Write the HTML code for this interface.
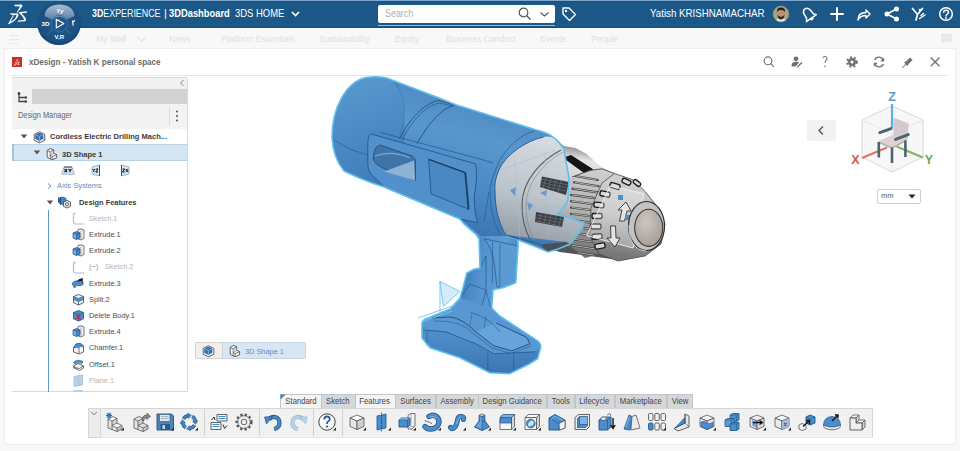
<!DOCTYPE html>
<html><head><meta charset="utf-8">
<style>
*{margin:0;padding:0;box-sizing:border-box}
html,body{width:960px;height:451px;overflow:hidden;background:#f8f8f8;font-family:"Liberation Sans",sans-serif;position:relative}
.a{position:absolute}
#hdr{left:0;top:0;width:960px;height:27.6px;background:#1b5888;border-top:1px solid #80a9d0;box-shadow:inset 0 1px 0 #1f4e7a,inset 0 -1px 0 #1a4b78}
.ht{color:#fff;font-size:11px;top:8px;white-space:nowrap;line-height:11px}
#nav{left:0;top:27.6px;width:960px;height:20.8px;background:#f8f8f8;border-top:1px solid #fdfdfd}
.nt{color:#e0e0e0;font-size:9.6px;top:34px;white-space:nowrap;line-height:10px;transform:scaleX(0.9);transform-origin:0 0}
#win{left:4px;top:48px;width:952px;height:397px;background:#fff;border:1px solid #ececec;border-top-color:#efefef}
</style></head><body>
<div id="hdr" class="a"></div>
<div id="nav" class="a"></div>
<div id="win" class="a"></div>
<!-- nav text -->
<svg class="a" style="left:9px;top:34px" width="10" height="11"><path d="M0 1.5H9.5M0 5.7H9.5M0 9.8H9.5" stroke="#e2e2e2" stroke-width="0.9"/></svg>
<div class="a nt m" style="left:96px">My Wall</div>
<svg class="a" style="left:137px;top:37px" width="9" height="5"><path d="M0.5 0.5L4.5 4L8.5 0.5" stroke="#d8d8d8" fill="none"/></svg>
<div class="a nt m" style="left:169px">News</div>
<div class="a nt m" style="left:221px">Platform Essentials</div>
<div class="a nt m" style="left:319px">Sustainability</div>
<div class="a nt m" style="left:395px">Equity</div>
<div class="a nt m" style="left:446px">Business Conduct</div>
<div class="a nt m" style="left:540px">Events</div>
<div class="a nt m" style="left:591px">People</div>
<svg class="a" style="left:940px;top:33px" width="13" height="12"><path d="M1 1H12V8.5H5L3 11V8.5H1Z" fill="#e8e8e8"/><circle cx="4" cy="4.8" r="0.7" fill="#f8f8f8"/><circle cx="6.5" cy="4.8" r="0.7" fill="#f8f8f8"/><circle cx="9" cy="4.8" r="0.7" fill="#f8f8f8"/></svg>

<!-- header content -->
<svg class="a" style="left:0;top:0" width="36" height="27" viewBox="0 0 36 27"><g fill="#fff">
<path d="M14.3 4.8L21.6 4.6Q23 5 22.2 6.6L17.6 12.6L16.6 12.4L20.2 6.4L14.8 6.3Z"/>
<path d="M10.2 13.3L17.6 13.5Q19 13.8 18.4 15.6Q16.5 21 8.8 24.2Q7.9 24.3 8.3 23.5L13.1 15.1L13.9 15.3L10.6 21.8Q15.6 19.4 16.6 14.9L10.8 14.8Z"/>
<path d="M18.6 12.2L27.2 11.2L26.6 12.8L21.4 13.2Q24.6 16 25.8 18.6Q26.6 20.6 25 21.2L17.4 21.8L18.2 20.6L24.2 20Q23.4 17 20.6 14.6Q19.6 13.6 18.6 12.2Z"/>
</g></svg>
<div class="a ht m" style="left:91.5px;transform:scaleX(0.806);transform-origin:0 0"><b>3D</b>EXPERIENCE</div>
<div class="a ht m" style="left:164px">|</div>
<div class="a ht m" style="left:169.4px;transform:scaleX(0.85);transform-origin:0 0"><b>3DDashboard</b></div>
<div class="a ht m" style="left:235.4px;transform:scaleX(0.86);transform-origin:0 0">3DS HOME</div>
<svg class="a" style="left:291px;top:11px" width="9" height="6"><path d="M1 1L4.5 4.5L8 1" stroke="#fff" stroke-width="1.6" fill="none"/></svg>
<!-- search -->
<div class="a" style="left:378px;top:5px;width:177px;height:18px;background:#fff;border-radius:2px"></div>
<div class="a" style="left:378px;top:25px;width:177px;height:1px;background:#9fb6cc"></div>
<div class="a" style="left:385px;top:9px;font-size:10px;color:#b0b0b0;line-height:10px;transform:scaleX(0.89);transform-origin:0 0">Search</div>
<svg class="a" style="left:518px;top:7px" width="14" height="14"><circle cx="5.5" cy="5.5" r="4.3" stroke="#555" stroke-width="1.2" fill="none"/><path d="M8.7 8.7L12.5 12.5" stroke="#555" stroke-width="1.3"/></svg>
<svg class="a" style="left:540px;top:12px" width="9" height="5"><path d="M0.5 0.5L4.5 4L8.5 0.5" stroke="#555" stroke-width="1.1" fill="none"/></svg>
<svg class="a" style="left:561px;top:6px" width="16" height="16"><path d="M2 2H8L14.5 8.5L8.5 14.5L2 8Z" stroke="#fff" stroke-width="1.4" fill="none" stroke-linejoin="round"/><circle cx="5" cy="5" r="1.2" fill="#fff"/></svg>
<div class="a ht m" style="left:649.7px;transform:scaleX(0.885);transform-origin:0 0">Yatish KRISHNAMACHAR</div>
<svg class="a" style="left:772px;top:5px" width="18" height="18" viewBox="0 0 18 18"><defs><clipPath id="av"><circle cx="9" cy="9" r="7.9"/></clipPath></defs><g clip-path="url(#av)"><rect width="18" height="18" fill="#a9a67e"/><path d="M3 18Q4 13 9 13Q14 13 15 18Z" fill="#e8e8e8"/><ellipse cx="9" cy="9" rx="4" ry="5" fill="#b98f78"/><path d="M4.8 7.5Q4.5 2.5 9 2.6Q13.5 2.5 13.2 7.5Q12.5 5 9 5Q5.5 5 4.8 7.5Z" fill="#2b2522"/><path d="M5.5 10Q6 14.5 9 14.5Q12 14.5 12.5 10Q11 12 9 11.8Q7 12 5.5 10Z" fill="#2e2723"/></g><circle cx="9" cy="9" r="7.9" fill="none" stroke="#7f8f9a" stroke-width="0.6"/></svg>
<!-- right icons -->
<svg class="a" style="left:800px;top:6px" width="160" height="17" viewBox="0 0 160 17">
<g fill="none" stroke="#fff" stroke-width="1.5" stroke-linecap="round" stroke-linejoin="round">
<g transform="rotate(-35 8.5 8)"><path d="M8.5 1.8Q12 1.8 12.3 6.5L12.6 10.5L14.5 13H2.5L4.4 10.5L4.7 6.5Q5 1.8 8.5 1.8Z"/><path d="M7 13.5Q8.5 15.5 10 13.5"/></g>
<path d="M37 2V14M31 8H43" stroke-width="2"/>
<path d="M58 14C58 9 61 6.5 66 6.5V4L70 8L66 12V9.5C62 9.5 59.5 11 58 14Z"/>
<path d="M87 8L96.5 3M87 8L96.5 13" stroke-width="1.8"/>
<path d="M112.5 2.5L117.5 8.5L116 14M122.5 2.5L117.5 8.5" stroke-width="1.7"/><path d="M119.5 12.5L125 9M121 9.5L123.5 7.5" stroke-width="1.4"/>
<circle cx="146" cy="8" r="6.3"/><path d="M143.7 6.3C143.7 3.5 148.5 3.5 148.5 6.3C148.5 8 146 8 146 10"/>
</g>
<g fill="#fff"><circle cx="87" cy="8" r="2.5"/><circle cx="96.5" cy="3" r="2.5"/><circle cx="96.5" cy="13" r="2.5"/><circle cx="146" cy="12" r="0.9"/><circle cx="120" cy="4" r="1.3"/></g>
</svg>
<!-- TREE -->
<!-- panel -->
<div class="a" style="left:12px;top:77px;width:176px;height:315px;background:#fff;border:1px solid #d9d9d9;border-left:none;border-top-right-radius:3px"></div>
<div class="a" style="left:12px;top:78px;width:175px;height:11px;background:#f1f1f1;border-top-right-radius:3px"></div>
<svg class="a" style="left:179px;top:79px" width="6" height="8"><path d="M4.5 1L1.5 4L4.5 7" stroke="#777" fill="none" stroke-width="0.9"/></svg>
<div class="a" style="left:12px;top:89px;width:175px;height:15px;background:#d2d2d2"></div>
<div class="a" style="left:12px;top:89px;width:20px;height:15px;background:#f2f2f2"></div>
<svg class="a" style="left:17px;top:92px" width="11" height="11" viewBox="0 0 11 11"><g fill="none" stroke="#444" stroke-width="1.3"><path d="M2 1V9.5H8.5M2 5.5H8"/></g><circle cx="2" cy="1.5" r="1.4" fill="#444"/><circle cx="8.8" cy="5.5" r="1.3" fill="#444"/><circle cx="8.8" cy="9.5" r="1.3" fill="#444"/></svg>
<div class="a" style="left:12px;top:104px;width:175px;height:24.5px;background:#f3f3f3"></div>
<div class="a m" style="left:17.5px;top:111px;font-size:8.2px;line-height:10px;color:#666;white-space:nowrap;transform:scaleX(0.9);transform-origin:0 0">Design Manager</div>
<div class="a" style="left:169px;top:107px;width:1px;height:19px;background:#dcdcdc"></div>
<svg class="a" style="left:175px;top:110px" width="4" height="12"><circle cx="2" cy="1.5" r="1" fill="#555"/><circle cx="2" cy="6" r="1" fill="#555"/><circle cx="2" cy="10.5" r="1" fill="#555"/></svg>
<div class="a" style="left:13px;top:144px;width:174px;height:16.6px;background:#d5e5f2;border-top:1px solid #b9d1e5;border-bottom:1px solid #b9d1e5"></div>
<div class="a" style="left:12px;top:144px;width:2px;height:16.6px;background:#a9c3da"></div>
<div class="a" style="left:47.5px;top:209.5px;width:1.5px;height:182px;background:#5b98c8"></div>
<svg class="a" style="left:20px;top:134.20px" width="8" height="5" viewBox="0 0 8 5"><path d="M0.8 0.5H7.2L4 4.5Z" fill="#555"/></svg>
<svg class="a" style="left:32.5px;top:150.30px" width="8" height="5" viewBox="0 0 8 5"><path d="M0.8 0.5H7.2L4 4.5Z" fill="#555"/></svg>
<svg class="a" style="left:45.5px;top:199.50px" width="8" height="5" viewBox="0 0 8 5"><path d="M0.8 0.5H7.2L4 4.5Z" fill="#555"/></svg>
<svg class="a" style="left:46.5px;top:182.50px" width="5" height="6" viewBox="0 0 5 6"><path d="M1 0.5L4 3L1 5.5" stroke="#4a86c0" fill="none" stroke-width="0.9"/></svg>
<svg class="a" style="left:32.5px;top:130.60px" width="13" height="13" viewBox="0 0 13 13"><path d="M6.5 0.8L11.8 3.3V9.3L6.5 11.8L1.2 9.3V3.3Z" fill="#f6f6f6" stroke="#555" stroke-width="0.9" stroke-linejoin="round"/><path d="M2.6 3.8L6.2 2L10 3.6V7.6L6.4 9.6L2.6 7.8Z" fill="#2f73b0" stroke="#1d4f80" stroke-width="0.5"/><path d="M2.6 3.8L6.4 5.6L10 3.6M6.4 5.6V9.6" stroke="#9cc3e6" stroke-width="0.7" fill="none"/><path d="M10 7.6L11.8 9.3M6.4 9.6V11.8" stroke="#555" stroke-width="0.6"/></svg>
<svg class="a" style="left:45.5px;top:146.90px" width="12" height="13" viewBox="0 0 12 13"><path d="M1.2 3.4L4.6 1.4L7.6 2.8V6.2L10.6 7.6V10.8L6.2 12.8L1.2 10.4Z" fill="#f2f2f2" stroke="#555" stroke-width="0.9" stroke-linejoin="round"/><path d="M1.2 3.4L4.2 5V12M4.2 5L7.6 2.8M4.2 8.4L7.6 6.2M6.2 9.6L10.6 7.6M6.2 9.6V12.8M4.2 8.4L6.2 9.6" stroke="#555" stroke-width="0.75" fill="none"/><path d="M4.6 5.4L7.2 3.8V6.4L4.6 8Z" fill="#d9d9d9"/></svg>
<svg class="a" style="left:61px;top:165.5px" width="14" height="9" viewBox="0 0 14 9"><path d="M3 1H11L13.2 8.2H0.8Z" fill="#d3e6f5" stroke="#7f9bb5" stroke-width="0.7"/><path d="M3 1H11" stroke="#444" stroke-width="0.9"/><path d="M3.5 3.2L6 6.2M6 3.2L3.5 6.2M7.5 3.2L9 4.7L10.5 3.2M9 4.7V6.2" stroke="#111" stroke-width="1.1" fill="none"/></svg>
<svg class="a" style="left:91px;top:163.5px" width="10" height="13" viewBox="0 0 10 13"><path d="M1 3L8.5 1V12L1 10Z" fill="#d3e6f5" stroke="#7f9bb5" stroke-width="0.7"/><path d="M8.5 1V12" stroke="#444" stroke-width="0.9"/><path d="M1.5 5L2.8 6.3L4 5M2.8 6.3V8M4.8 5H7L4.8 8H7" stroke="#111" stroke-width="1" fill="none"/></svg>
<svg class="a" style="left:119.5px;top:163.5px" width="10" height="13" viewBox="0 0 10 13"><path d="M1.5 1L9 3V10L1.5 12Z" fill="#d3e6f5" stroke="#7f9bb5" stroke-width="0.7"/><path d="M1.5 1V12" stroke="#444" stroke-width="0.9"/><path d="M2.5 5H4.7L2.5 8H4.7M5.8 5L8.2 8M8.2 5L5.8 8" stroke="#111" stroke-width="1" fill="none"/></svg>
<svg class="a" style="left:56.5px;top:195.60px" width="15" height="13" viewBox="0 0 15 13"><path d="M2 2.5L5.5 1L9 2.5V7L5.5 8.5L2 7Z" fill="#3f86c6" stroke="#22486e" stroke-width="0.7"/><path d="M1.5 1.2V6.5M3.5 1V9" stroke="#22486e" stroke-width="0.9"/><path d="M6.5 6L10 4.5L13.5 6V10.5L10 12L6.5 10.5Z" fill="#eaeaea" stroke="#444" stroke-width="0.8"/><circle cx="10" cy="8.2" r="1.6" fill="none" stroke="#444" stroke-width="0.8"/></svg>
<svg class="a" style="left:71.5px;top:212.00px" width="13" height="13" viewBox="0 0 13 13"><path d="M1.5 1.5V10.5L3 12H12" fill="none" stroke="#a9bfd3" stroke-width="1.2"/><path d="M1.5 1.5H4" stroke="#a9bfd3" stroke-width="1.2"/></svg>
<svg class="a" style="left:71.5px;top:228.20px" width="13" height="13" viewBox="0 0 13 13"><path d="M6 1.5L9 0.8L12 2V10.5L9 12L6 10.8Z" fill="#f2f2f2" stroke="#555" stroke-width="0.8"/><path d="M9 2.5V11.5" stroke="#888" stroke-width="0.6"/><path d="M1 5L4.5 3.5L8 5V10L4.5 11.5L1 10Z" fill="#4189c9" stroke="#21507d" stroke-width="0.7"/><path d="M1 5L4.5 6.5L8 5M4.5 6.5V11.5" stroke="#21507d" stroke-width="0.6" fill="none"/><path d="M1.5 5.5L4.2 6.7V10.8L1.5 9.6Z" fill="#74afe3"/></svg>
<svg class="a" style="left:71.5px;top:244.40px" width="13" height="13" viewBox="0 0 13 13"><path d="M6 1.5L9 0.8L12 2V10.5L9 12L6 10.8Z" fill="#f2f2f2" stroke="#555" stroke-width="0.8"/><path d="M9 2.5V11.5" stroke="#888" stroke-width="0.6"/><path d="M1 5L4.5 3.5L8 5V10L4.5 11.5L1 10Z" fill="#4189c9" stroke="#21507d" stroke-width="0.7"/><path d="M1 5L4.5 6.5L8 5M4.5 6.5V11.5" stroke="#21507d" stroke-width="0.6" fill="none"/><path d="M1.5 5.5L4.2 6.7V10.8L1.5 9.6Z" fill="#74afe3"/></svg>
<svg class="a" style="left:71.5px;top:260.60px" width="13" height="13" viewBox="0 0 13 13"><path d="M1.5 1.5V10.5L3 12H12" fill="none" stroke="#a9bfd3" stroke-width="1.2"/><path d="M1.5 1.5H4" stroke="#a9bfd3" stroke-width="1.2"/></svg>
<svg class="a" style="left:71px;top:276.80px" width="14" height="13" viewBox="0 0 14 13"><path d="M1 6.5Q4 3 6 4Q8 5 10.5 2.5L12.5 7Q10 9.5 8 8.5Q5.5 7.5 3.5 11Z" fill="#4a8fcf" stroke="#21507d" stroke-width="0.7"/><path d="M7 2.5L12 1L11.2 6L10.2 3.8Z" fill="#111"/><path d="M6 4.2L10.8 3" stroke="#111" stroke-width="1"/></svg>
<svg class="a" style="left:71.5px;top:293.00px" width="13" height="13" viewBox="0 0 13 13"><path d="M1.5 3.5L6.5 1.5L11.5 3.5V9.8L6.5 12L1.5 9.8Z" fill="#f0f0f0" stroke="#444" stroke-width="0.8"/><path d="M1.5 3.5L6.5 5.5L11.5 3.5V6.5L6.5 8.5L1.5 6.5Z" fill="#5096d4" stroke="#21507d" stroke-width="0.6"/><path d="M6.5 8.5V12" stroke="#444" stroke-width="0.7"/></svg>
<svg class="a" style="left:71.5px;top:309.20px" width="13" height="13" viewBox="0 0 13 13"><path d="M1.5 3.5L6.5 1.5L11.5 3.5V9.8L6.5 12L1.5 9.8Z" fill="#4a8ecf" stroke="#21507d" stroke-width="0.8"/><path d="M1.5 3.5L6.5 5.5L11.5 3.5M6.5 5.5V12" stroke="#21507d" stroke-width="0.6" fill="none"/><path d="M4.3 6L8.3 10M8.3 6L4.3 10" stroke="#d8282a" stroke-width="1.4"/></svg>
<svg class="a" style="left:71.5px;top:325.40px" width="13" height="13" viewBox="0 0 13 13"><path d="M6 1.5L9 0.8L12 2V10.5L9 12L6 10.8Z" fill="#f2f2f2" stroke="#555" stroke-width="0.8"/><path d="M9 2.5V11.5" stroke="#888" stroke-width="0.6"/><path d="M1 5L4.5 3.5L8 5V10L4.5 11.5L1 10Z" fill="#4189c9" stroke="#21507d" stroke-width="0.7"/><path d="M1 5L4.5 6.5L8 5M4.5 6.5V11.5" stroke="#21507d" stroke-width="0.6" fill="none"/><path d="M1.5 5.5L4.2 6.7V10.8L1.5 9.6Z" fill="#74afe3"/></svg>
<svg class="a" style="left:71.5px;top:341.60px" width="13" height="13" viewBox="0 0 13 13"><path d="M1.5 6L4 2L8.5 1.5L11.5 4V10L7 12L1.5 10Z" fill="#f4f4f4" stroke="#444" stroke-width="0.8"/><path d="M1.5 6L4 2L8.5 1.5L11.5 4L7 5Z" fill="#4d92d2" stroke="#21507d" stroke-width="0.6"/><path d="M7 5V12" stroke="#444" stroke-width="0.7"/></svg>
<svg class="a" style="left:71.5px;top:357.80px" width="13" height="13" viewBox="0 0 13 13"><path d="M2 7.5L6 5.5L11.5 8L7.5 10.5L2 9.5Z" fill="#f2f2f2" stroke="#444" stroke-width="0.8"/><path d="M1.5 4.5Q5 0.5 11 3.5L10 5.5Q6 3.5 3 6Z" fill="#4d92d2" stroke="#21507d" stroke-width="0.6"/><path d="M2 7.5V10L7.5 12.5L11.5 10V8" fill="none" stroke="#444" stroke-width="0.8"/></svg>
<svg class="a" style="left:72.5px;top:373.60px" width="11" height="13" viewBox="0 0 11 13"><path d="M1 2.5L9.5 1V11L1 12.5Z" fill="#b8d3e8" stroke="#9cbad4" stroke-width="0.8"/><path d="M5.2 1.8V11.8" stroke="#9cbad4" stroke-width="0.6"/></svg>
<div class="a" style="left:73px;top:389.5px;width:10px;height:2px;background:#b8d3e8"></div>
<div class="a m" style="left:50.3px;top:128.90px;font-size:8px;line-height:16px;white-space:nowrap;color:#3a3a3a;font-weight:bold;transform:scaleX(0.94);transform-origin:0 0">Cordless Electric Drilling Mach...</div>
<div class="a m" style="left:62.4px;top:146.60px;font-size:8px;line-height:16px;white-space:nowrap;color:#3a3a3a;font-weight:bold;transform:scaleX(0.94);transform-origin:0 0">3D Shape 1</div>
<div class="a m" style="left:57px;top:178.10px;font-size:8px;line-height:16px;white-space:nowrap;color:#5a8fc3;font-weight:normal;transform:scaleX(0.933);transform-origin:0 0">Axis Systems</div>
<div class="a m" style="left:78.5px;top:195.20px;font-size:8px;line-height:16px;white-space:nowrap;color:#3a3a3a;font-weight:bold;transform:scaleX(0.923);transform-origin:0 0">Design Features</div>
<div class="a m" style="left:88.9px;top:210.70px;font-size:8px;line-height:16px;white-space:nowrap;color:#b5b5b5;font-weight:normal;transform:scaleX(0.913);transform-origin:0 0">Sketch.1</div>
<div class="a m" style="left:88.7px;top:226.90px;font-size:8px;line-height:16px;white-space:nowrap;color:#4d4d4d;font-weight:normal;transform:scaleX(0.925);transform-origin:0 0">Extrude.1</div>
<div class="a m" style="left:88.7px;top:243.10px;font-size:8px;line-height:16px;white-space:nowrap;color:#4d4d4d;font-weight:normal;transform:scaleX(0.925);transform-origin:0 0">Extrude.2</div>
<div class="a m" style="left:88.7px;top:259.30px;font-size:8px;line-height:16px;white-space:nowrap;color:#999;font-weight:normal;transform:scaleX(0.925);transform-origin:0 0">(−)</div>
<div class="a m" style="left:105px;top:259.30px;font-size:8px;line-height:16px;white-space:nowrap;color:#b5b5b5;font-weight:normal;transform:scaleX(0.913);transform-origin:0 0">Sketch.2</div>
<div class="a m" style="left:88.7px;top:275.50px;font-size:8px;line-height:16px;white-space:nowrap;color:#4d4d4d;font-weight:normal;transform:scaleX(0.925);transform-origin:0 0">Extrude.3</div>
<div class="a m" style="left:88.7px;top:291.70px;font-size:8px;line-height:16px;white-space:nowrap;color:#4d4d4d;font-weight:normal;transform:scaleX(0.925);transform-origin:0 0">Split.2</div>
<div class="a m" style="left:89px;top:307.90px;font-size:8px;line-height:16px;white-space:nowrap;color:#4d4d4d;font-weight:normal;transform:scaleX(0.923);transform-origin:0 0">Delete Body.1</div>
<div class="a m" style="left:88.7px;top:324.10px;font-size:8px;line-height:16px;white-space:nowrap;color:#4d4d4d;font-weight:normal;transform:scaleX(0.925);transform-origin:0 0">Extrude.4</div>
<div class="a m" style="left:88.7px;top:340.30px;font-size:8px;line-height:16px;white-space:nowrap;color:#4d4d4d;font-weight:normal;transform:scaleX(0.925);transform-origin:0 0">Chamfer.1</div>
<div class="a m" style="left:88.7px;top:356.50px;font-size:8px;line-height:16px;white-space:nowrap;color:#4d4d4d;font-weight:normal;transform:scaleX(0.925);transform-origin:0 0">Offset.1</div>
<div class="a m" style="left:88.7px;top:372.70px;font-size:8px;line-height:16px;white-space:nowrap;color:#b5b5b5;font-weight:normal;transform:scaleX(0.925);transform-origin:0 0">Plane.1</div>
<!-- /TREE -->
<!-- MODEL -->
<svg class="a" style="left:0;top:0" width="960" height="451" viewBox="0 0 960 451">
<defs>
<linearGradient id="gBody" gradientUnits="userSpaceOnUse" x1="470" y1="95" x2="435" y2="225"><stop offset="0" stop-color="#4f8ac2"/><stop offset="0.3" stop-color="#5896ce"/><stop offset="0.65" stop-color="#4b8ac7"/><stop offset="1" stop-color="#3a75b1"/></linearGradient>
<linearGradient id="gCap" gradientUnits="userSpaceOnUse" x1="345" y1="85" x2="380" y2="185"><stop offset="0" stop-color="#5896ce"/><stop offset="1" stop-color="#3f7dba"/></linearGradient>
<linearGradient id="gGray" gradientUnits="userSpaceOnUse" x1="560" y1="135" x2="530" y2="250"><stop offset="0" stop-color="#d9dee3"/><stop offset="0.55" stop-color="#bcc4cc"/><stop offset="1" stop-color="#8e979f"/></linearGradient>
<linearGradient id="gNoz" gradientUnits="userSpaceOnUse" x1="590" y1="148" x2="575" y2="255"><stop offset="0" stop-color="#8a8a8a"/><stop offset="0.12" stop-color="#e4e4e4"/><stop offset="0.5" stop-color="#c4c4c4"/><stop offset="1" stop-color="#6f6f6f"/></linearGradient>
<linearGradient id="gChuck" gradientUnits="userSpaceOnUse" x1="630" y1="175" x2="615" y2="262"><stop offset="0" stop-color="#cfcfcf"/><stop offset="0.5" stop-color="#b0b0b0"/><stop offset="1" stop-color="#6e6e6e"/></linearGradient>
<linearGradient id="gCone" gradientUnits="userSpaceOnUse" x1="650" y1="185" x2="640" y2="258"><stop offset="0" stop-color="#cfcfcf"/><stop offset="0.45" stop-color="#bababa"/><stop offset="1" stop-color="#777777"/></linearGradient>
<radialGradient id="gFace" cx="0.4" cy="0.35" r="0.7"><stop offset="0" stop-color="#cdc6c1"/><stop offset="1" stop-color="#a39c97"/></radialGradient>
<linearGradient id="gHandle" gradientUnits="userSpaceOnUse" x1="465" y1="260" x2="518" y2="270"><stop offset="0" stop-color="#3f7dbb"/><stop offset="0.35" stop-color="#5593cf"/><stop offset="0.7" stop-color="#5d9bd4"/><stop offset="1" stop-color="#4582c0"/></linearGradient>
<linearGradient id="gBaseF" gradientUnits="userSpaceOnUse" x1="480" y1="335" x2="480" y2="373"><stop offset="0" stop-color="#4f8dca"/><stop offset="1" stop-color="#3a76b2"/></linearGradient>
<clipPath id="cRib"><path d="M598 166Q612 168 628 180L606 252L597 251Q586 230 588 200Q590 178 598 166Z"/></clipPath>
</defs>
<!-- nozzle cone -->
<path d="M548 134L564 146L575.5 148L586 153.4L600 165.8L611 172.9L622 177L612 259L590 251L565 250L533 244Z" fill="url(#gNoz)"/>
<path d="M563 157.8L571 155L593.2 169.3L586 174.6Z" fill="#151515"/>
<path d="M533 244L600 248L612 259L560 252Z" fill="#555"/>
<!-- ribbed ring -->
<path d="M570 178L590 170.4L602 168.8L614.5 173.5L602 183L591 208L589.7 236L599 254L585 258L570 246Z" fill="url(#gChuck)"/>
<clipPath id="cRib2"><path d="M570 178L590 170.4L602 168.8L614.5 173.5L602 183L591 208L589.7 236L599 254L585 258L570 246Z"/></clipPath>
<g clip-path="url(#cRib2)">
<path d="M575.5 176.0L597.6 180.0M574.0 182.3L598.5 186.3M572.5 188.6L599.4 192.6M571.0 194.9L600.3 198.9M571.0 201.2L601.2 205.2M571.0 207.5L602.1 211.5M571.0 213.8L603.0 217.8M571.0 220.1L602.1 224.1M571.0 226.4L601.2 230.4M571.0 232.7L600.3 236.7M571.0 239.0L599.4 243.0M571.0 245.3L598.5 249.3M571.0 251.6L597.6 255.6" stroke="#3a3a3a" stroke-width="2.1" fill="none" stroke-linecap="round"/>
<path d="M576.5 176.0L596.6 180.0M575.0 182.3L597.5 186.3M573.5 188.6L598.4 192.6M572.0 194.9L599.3 198.9M572.0 201.2L600.2 205.2M572.0 207.5L601.1 211.5M572.0 213.8L602.0 217.8M572.0 220.1L601.1 224.1M572.0 226.4L600.2 230.4M572.0 232.7L599.3 236.7M572.0 239.0L598.4 243.0M572.0 245.3L597.5 249.3M572.0 251.6L596.6 255.6" stroke="#d0d0d0" stroke-width="0.8" fill="none" stroke-linecap="round"/>
</g>
<path d="M572 177L590 170.4L602 168.8L614.5 173.5" fill="none" stroke="#444" stroke-width="0.9"/>
<!-- collar cone -->
<path d="M614.5 173.5L633 179.7L645.6 192L658 207.6L665 224L661 244L645 256L618 261L599 254L589.7 236L591 208L602 183Z" fill="url(#gCone)" stroke="#4a4a4a" stroke-width="0.8"/>
<g fill="#d8d8d8" stroke="#1b1b1b" stroke-width="1.4">
<rect x="622" y="179.5" width="9" height="4.5" rx="1.5" transform="rotate(25 626.5 181.7)"/>
<rect x="610" y="183.5" width="10" height="5" rx="1.5" transform="rotate(18 615 186)"/>
<rect x="600" y="191.5" width="10" height="5" rx="1.5" transform="rotate(12 605 194)"/>
<rect x="594" y="202.5" width="10" height="5" rx="1.5" transform="rotate(6 599 205)"/>
<rect x="592" y="213.5" width="10" height="5" rx="1.5"/>
<rect x="591" y="224" width="10" height="5" rx="1.5"/>
<rect x="592" y="234" width="10" height="5" rx="1.5" transform="rotate(-5 597 236.5)"/>
<rect x="595" y="243.5" width="10" height="5" rx="1.5" transform="rotate(-10 600 246)"/>
<rect x="633" y="181" width="8" height="4" rx="1.5" transform="rotate(38 637 183)"/>
</g>
<path d="M610 186L644 193.6L633 248L586.6 235.6Z" fill="rgba(255,255,255,0.28)" stroke="#efefef" stroke-width="0.9"/>
<path d="M626 202L618 210H622L619.5 221H624.5L627 211H631Z" fill="#e4e4e4" stroke="#333" stroke-width="0.9" stroke-linejoin="round"/>
<path d="M615 247L607 238H611L610.5 226H615.5L616 238H620Z" fill="#e4e4e4" stroke="#333" stroke-width="0.9" stroke-linejoin="round"/>
<path d="M618 195H623V200H618Z M625 215H630V220H625Z" fill="#4f8fc8"/>
<!-- front face -->
<ellipse cx="646.5" cy="226" rx="18" ry="24.5" fill="#c2c2c2" stroke="#2e2e2e" stroke-width="1.2"/>
<ellipse cx="648.7" cy="227.8" rx="14" ry="18.6" fill="url(#gFace)" stroke="#3a3a3a" stroke-width="1.1"/>
<path d="M629 225Q629 250 646 251" fill="none" stroke="#eee" stroke-width="0.8"/>
<!-- body -->
<path d="M366 77.5C376 76 386 77 392 80L438.5 97.7L456 104.8L536.4 130Q556 134 564 150L569 178L568 199.5L566 204L558 214L584 223L582 229L570 244L558 249L548 252L534 246L518 240L506 236L480 236L460 219L384 187Q362 180 344 171Q333 158 332 137C332 108 346 82 366 77.5Z" fill="url(#gBody)"/>
<path d="M366 77.5C376 76 386 77 392 80C404 96 408 130 402 156C398 172 392 182 386 187L384 187Q362 180 344 171Q333 158 332 137C332 108 346 82 366 77.5Z" fill="url(#gCap)"/>
<!-- interior / translucent shell -->
<path d="M543.5 137C525 141 504 156 498 172C495 180 494.5 186 495 192C495 210 500 226 506 235L566 242L570 244L582 229L584 223L558 214L566 204L568 199.5L569 178L564 150Q556 134 543.5 137Z" fill="url(#gGray)"/>
<path d="M540 244.5L566 242L570 244L558 249L548 252Z" fill="#4a4f55"/>
<path d="M561 150C542 160 522 180 522 205C522 220 526 232 530 239" fill="none" stroke="#555d66" stroke-width="1.1"/>
<path d="M563 152C545 162 526 182 526 206C526 220 530 232 534 240" fill="none" stroke="#7d858e" stroke-width="0.6"/>
<path d="M500 170L556 150M500 215L560 205M515 160L520 240M545 152L548 238" stroke="#a9bccd" stroke-width="0.5" fill="none"/>
<path d="M542 176.4L569 182L566 195L540 187Z" fill="#3b4046"/>
<path d="M536 212L564 217L562 227L535 222Z" fill="#3b4046"/>
<g stroke="#7b8087" stroke-width="0.5"><path d="M541 179L568 185M540 182L567 188M540 185L566 191M537 215L563 220M536 218L563 223M536 221L562 226M546 177.5L543 188M551 178.5L548 189.5M556 179.5L553 191M561 180.5L558 192M541 213L539 222M546 214L544 223M551 215L549 224.5M556 216L554 225.5M561 217L559 226"/></g>
<path d="M510 190L516 187L515 196Z M527 202L533 205L529 211Z M540 193L547 190L546 196Z" fill="#6b98c2"/>
<path d="M543.5 137C525 141 504 156 498 172C495 180 494.5 186 495 192C495 210 500 226 506 235L540 244" fill="none" stroke="#2d5f90" stroke-width="1"/>
<path d="M534.6 131C520 134 503 150 495.5 170C491 182 490 188 490 192C490 212 496 228 502 238" fill="none" stroke="#2d5f90" stroke-width="0.8"/>
<!-- body details -->
<g fill="none" stroke="#2b5d8f" stroke-width="0.8">
<path d="M394 80C402 92 405 105 404 118C403 128 401 134 399.5 140" stroke="#3f78ad" stroke-width="0.7"/>
<path d="M332 139L352 150L368 155" stroke-width="0.7"/>
<path d="M399.5 138.5C410 118 425 103 438.5 100.4L454.5 104.8" stroke="#1f4a75" stroke-width="0.8"/>
<path d="M402 139.5C412 120 426 106 439 103L454 106" stroke="#1f4a75" stroke-width="0.6"/>
<path d="M417 143.8C428 124 440 110 452.7 105.7" stroke="#1f4a75" stroke-width="0.8"/>
<path d="M380 132.3L480 159L493 163" stroke="#24578a" stroke-width="0.7"/>
<path d="M484 222L489 192" stroke-width="0.7"/>
</g>
<path d="M371 133.9L475.3 163.8Q477 170 476.4 180.4L474.2 198Q474 212 477.5 222.6L460 219L384 187L373.3 176Q367.8 172 367.8 164L367.8 142.7Q368 135 371 133.9Z" fill="#5190cb" stroke="#24578a" stroke-width="0.9"/>
<path d="M380 145L412 156Q415.4 158 415.4 161L415.4 180.4L388.8 170.5Q373.3 165 373.3 158Q374 146 380 145Z" fill="#3f74a8" stroke="#1f4a75" stroke-width="0.8"/>
<path d="M384 171.6L414 160.5L415 180.4Z" fill="#8db2d3"/>
<path d="M375 156Q392 150 410 158" stroke="#7fa6cb" stroke-width="1.2" fill="none"/>
<path d="M428.7 159.4L465.3 172.7L468.6 209.3L431 193.7Z" fill="#4a88c4" stroke="#24578a" stroke-width="0.9"/>
<path d="M465.3 172.7L468.6 209.3" stroke="#1c3f63" stroke-width="1.8"/>
<path d="M428.7 159.4L465.3 172.7" stroke="#1c3f63" stroke-width="1.3"/>
<path d="M366 77.5C376 76 386 77 392 80L438.5 97.7L456 104.8L536.4 130Q556 134 564 150L569 178L568 199.5L566 204L558 214L584 223L582 229L570 244L558 249L548 252L534 246L518 240" fill="none" stroke="#5fc0ef" stroke-width="1.6"/>
<path d="M460 219L384 187Q362 180 344 171Q333 158 332 137C332 108 346 82 366 77.5" fill="none" stroke="#5fc0ef" stroke-width="1.6"/>
<!-- handle -->
<path d="M459 218L464 224L476.6 235L479 238.8L480 268L474 269.3L466.8 273L463 287.6L460 298L450 309L428 318Q423 319 422 322.9L422 337.9L430 347.8L459.9 357.8L489.8 372.8L509.7 373.8L529.7 363.8L537.6 358.8L540.6 347.8Q541.5 344 537.6 340.9L499.7 316L491.8 308L493 290L503.4 287.6L515.6 282.7L518 246L518 240L506 236L480 236Z" fill="url(#gHandle)"/>
<path d="M484 238.8L518 246L515.6 282.7L503.4 287.6L497 287L494 262Q492 248 484 238.8Z" fill="#5c9ad3" stroke="#24578a" stroke-width="0.7"/>
<path d="M492.4 242L492.4 283M499.8 244L499.8 286" stroke="#24578a" stroke-width="0.6" fill="none"/>
<path d="M480 268L486 256L486 290L481 310M466.8 273L474 269.3" fill="none" stroke="#24578a" stroke-width="0.7"/>
<path d="M460 298L470 284L486 290L491 310" fill="none" stroke="#24578a" stroke-width="0.6"/>
<path d="M422 322.9Q423 319 428 318L450 309L460 298L491.8 308L499.7 316L537.6 340.9Q541.5 344 540.6 347.8L535.6 351.8L493.8 353.8L475.8 343.8L445.9 331.9L424 329.9Z" fill="#5897d1"/>
<path d="M495.8 322.9L525.7 336.9L529.7 343.8L511.7 350.8L493.8 345.8L475.8 331.9Z" fill="#66a4db"/>
<path d="M432 318L450 317Q462 318 475.8 331.9L493.8 345.8L511.7 350.8L529.7 343.8L527.7 338.9L525.7 336.9L495.8 322.9" fill="none" stroke="#1f4a75" stroke-width="0.9"/>
<path d="M434 321Q462 320 474 334L492 348L511 353.5L531 346" fill="none" stroke="#2b5d8f" stroke-width="0.6"/>
<path d="M424 329.9L445.9 331.9L475.8 343.8L493.8 353.8L535.6 351.8L540.6 347.8L537.6 358.8L529.7 363.8L509.7 373.8L489.8 372.8L459.9 357.8L430 347.8L422 337.9Z" fill="url(#gBaseF)"/>
<path d="M424 329.9L445.9 331.9L475.8 343.8L493.8 353.8L535.6 351.8" fill="none" stroke="#24578a" stroke-width="0.8"/>
<path d="M427 331V346M487.8 353V372M513.7 353V372" stroke="#24578a" stroke-width="0.6"/>
<path d="M470 312Q490 318 500 332" stroke="#24578a" stroke-width="0.6" fill="none"/>
<path d="M486 316L484 328M472 313L470 325" stroke="#24578a" stroke-width="0.5"/>
<path d="M459 218L464 224L476.6 235L479 238.8L480 268L474 269.3L466.8 273L463 287.6L460 298L450 309L428 318Q423 319 422 322.9L422 337.9L430 347.8L459.9 357.8L489.8 372.8L509.7 373.8L529.7 363.8L537.6 358.8L540.6 347.8Q541.5 344 537.6 340.9L499.7 316L491.8 308L493 290L503.4 287.6L515.6 282.7L518 246L518 240" fill="none" stroke="#5fc0ef" stroke-width="1.6"/>
<!-- transparent plane -->
<path d="M440 281.5L460 291.5L443.3 306.5Z" fill="rgba(160,210,240,0.45)" stroke="#6cc4f0" stroke-width="0.9"/>
<path d="M440 281L440 314M418 318L455 305M422 322L452 311" fill="none" stroke="#6cc4f0" stroke-width="0.9"/>
</svg>
<!-- /MODEL -->
<!-- VP -->
<!-- viewport widgets -->
<div class="a" style="left:807px;top:120px;width:29px;height:21px;background:#f2f2f2;border-radius:2px"></div>
<svg class="a" style="left:817px;top:125px" width="8" height="11"><path d="M6 1.5L2 5.5L6 9.5" stroke="#555" stroke-width="1.4" fill="none"/></svg>
<svg class="a" style="left:845px;top:85px" width="100" height="90" viewBox="0 0 100 90">
<path d="M47 21L17 35V72L47 87L78 72V35Z" fill="#f7f7f7" stroke="#cfcfcf" stroke-width="0.8"/>
<path d="M17 35L47 49L78 35M47 49V87" stroke="#dedede" stroke-width="0.6" fill="none"/>
<path d="M47 19V43" stroke="#66ade0" stroke-width="2.2"/>
<path d="M17 73L42 62.5" stroke="#e2725f" stroke-width="2"/>
<path d="M51.6 61.5L78 72.5" stroke="#7db65e" stroke-width="2"/>
<path d="M48.3 32.6L63.6 38.6L62.6 55L48.3 51Z" fill="#d3c9ce"/>
<path d="M33.6 55.9L47 50L61.6 54L47 61.9Z" fill="#dcd3d7"/>
<path d="M33.6 55.9L47 61.9L61.6 54V56L47 63.9L33.6 57.9Z" fill="#b9adb3"/>
<path d="M34.8 47.6L46 43.6" stroke="#4d6473" stroke-width="3" stroke-linecap="round"/>
<path d="M50.6 54.4L63.2 49.6" stroke="#4d6473" stroke-width="3" stroke-linecap="round"/>
<path d="M33.8 57V72.5M47 62.5V78M60.4 55.5V72" stroke="#4d6473" stroke-width="2.6"/>
<text x="47" y="16.4" font-size="12.5" font-weight="bold" fill="#5b9bd0" text-anchor="middle" font-family="Liberation Sans">Z</text>
<text x="10.5" y="79.4" font-size="12.5" font-weight="bold" fill="#d9534f" text-anchor="middle" font-family="Liberation Sans">X</text>
<text x="84" y="79.4" font-size="12.5" font-weight="bold" fill="#6aa84f" text-anchor="middle" font-family="Liberation Sans">Y</text>
</svg>
<div class="a" style="left:876.5px;top:188.5px;width:44px;height:15px;background:#fff;border:1px solid #cfcfcf;border-radius:2px"></div>
<div class="a" style="left:881px;top:191px;font-size:7.5px;line-height:9px;color:#555">mm</div>
<svg class="a" style="left:908px;top:193.5px" width="8" height="5"><path d="M0.5 0.5H7.5L4 4.5Z" fill="#222"/></svg>
<div class="a" style="left:195px;top:342px;width:111px;height:17px;background:#d8e6f3;border:1px solid #c6d6e6;border-radius:2px"></div>
<div class="a" style="left:195px;top:342px;width:28px;height:17px;background:#efefef;border:1px solid #d3d3d3;border-radius:2px 0 0 2px"></div>
<svg class="a" style="left:202px;top:344.5px" width="13" height="13" viewBox="0 0 13 13"><path d="M6.5 0.8L11.8 3.3V9.3L6.5 11.8L1.2 9.3V3.3Z" fill="#f6f6f6" stroke="#555" stroke-width="0.9" stroke-linejoin="round"/><path d="M2.6 3.8L6.2 2L10 3.6V7.6L6.4 9.6L2.6 7.8Z" fill="#2f73b0" stroke="#1d4f80" stroke-width="0.5"/><path d="M2.6 3.8L6.4 5.6L10 3.6M6.4 5.6V9.6" stroke="#9cc3e6" stroke-width="0.7" fill="none"/></svg>
<svg class="a" style="left:229px;top:344px" width="12" height="13" viewBox="0 0 12 13"><path d="M1.2 3.4L4.6 1.4L7.6 2.8V6.2L10.6 7.6V10.8L6.2 12.8L1.2 10.4Z" fill="#f2f2f2" stroke="#555" stroke-width="0.9" stroke-linejoin="round"/><path d="M1.2 3.4L4.2 5V12M4.2 5L7.6 2.8M4.2 8.4L7.6 6.2M6.2 9.6L10.6 7.6M6.2 9.6V12.8M4.2 8.4L6.2 9.6" stroke="#555" stroke-width="0.75" fill="none"/><path d="M4.6 5.4L7.2 3.8V6.4L4.6 8Z" fill="#d9d9d9"/></svg>
<div class="a m" style="left:244.7px;top:346.8px;font-size:8px;line-height:10px;color:#5a8fc3;white-space:nowrap;transform:scaleX(0.92);transform-origin:0 0">3D Shape 1</div>
<!-- /VP -->
<!-- TOOLBAR -->
<!-- toolbar -->
<div class="a" style="left:280px;top:394.3px;width:41.6px;height:13.6px;background:#f4f4f4;border:1px solid #c3c6c9;border-bottom:none"></div>
<div class="a m" style="left:280px;top:395px;width:41.0px;height:13px;font-size:8.4px;line-height:13px;color:#444;text-align:center;white-space:nowrap"><span style="display:inline-block;transform:scaleX(0.92)">Standard</span></div>
<div class="a" style="left:321px;top:394.3px;width:34.6px;height:13.6px;background:#d5d8db;border:1px solid #c3c6c9;border-bottom:none"></div>
<div class="a m" style="left:321px;top:395px;width:34.0px;height:13px;font-size:8.4px;line-height:13px;color:#444;text-align:center;white-space:nowrap"><span style="display:inline-block;transform:scaleX(0.92)">Sketch</span></div>
<div class="a" style="left:355px;top:394.3px;width:40.6px;height:13.6px;background:#f4f4f4;border:1px solid #c3c6c9;border-bottom:none"></div>
<div class="a m" style="left:355px;top:395px;width:40.0px;height:13px;font-size:8.4px;line-height:13px;color:#444;text-align:center;white-space:nowrap"><span style="display:inline-block;transform:scaleX(0.92)">Features</span></div>
<div class="a" style="left:395px;top:394.3px;width:41.1px;height:13.6px;background:#d5d8db;border:1px solid #c3c6c9;border-bottom:none"></div>
<div class="a m" style="left:395px;top:395px;width:40.5px;height:13px;font-size:8.4px;line-height:13px;color:#444;text-align:center;white-space:nowrap"><span style="display:inline-block;transform:scaleX(0.92)">Surfaces</span></div>
<div class="a" style="left:435.5px;top:394.3px;width:43.4px;height:13.6px;background:#d5d8db;border:1px solid #c3c6c9;border-bottom:none"></div>
<div class="a m" style="left:435.5px;top:395px;width:42.8px;height:13px;font-size:8.4px;line-height:13px;color:#444;text-align:center;white-space:nowrap"><span style="display:inline-block;transform:scaleX(0.92)">Assembly</span></div>
<div class="a" style="left:478.3px;top:394.3px;width:69.0px;height:13.6px;background:#d5d8db;border:1px solid #c3c6c9;border-bottom:none"></div>
<div class="a m" style="left:478.3px;top:395px;width:68.4px;height:13px;font-size:8.4px;line-height:13px;color:#444;text-align:center;white-space:nowrap"><span style="display:inline-block;transform:scaleX(0.92)">Design Guidance</span></div>
<div class="a" style="left:546.7px;top:394.3px;width:28.4px;height:13.6px;background:#d5d8db;border:1px solid #c3c6c9;border-bottom:none"></div>
<div class="a m" style="left:546.7px;top:395px;width:27.8px;height:13px;font-size:8.4px;line-height:13px;color:#444;text-align:center;white-space:nowrap"><span style="display:inline-block;transform:scaleX(0.92)">Tools</span></div>
<div class="a" style="left:574.5px;top:394.3px;width:40.6px;height:13.6px;background:#d5d8db;border:1px solid #c3c6c9;border-bottom:none"></div>
<div class="a m" style="left:574.5px;top:395px;width:40.0px;height:13px;font-size:8.4px;line-height:13px;color:#444;text-align:center;white-space:nowrap"><span style="display:inline-block;transform:scaleX(0.92)">Lifecycle</span></div>
<div class="a" style="left:614.5px;top:394.3px;width:52.8px;height:13.6px;background:#d5d8db;border:1px solid #c3c6c9;border-bottom:none"></div>
<div class="a m" style="left:614.5px;top:395px;width:52.2px;height:13px;font-size:8.4px;line-height:13px;color:#444;text-align:center;white-space:nowrap"><span style="display:inline-block;transform:scaleX(0.92)">Marketplace</span></div>
<div class="a" style="left:666.7px;top:394.3px;width:26.4px;height:13.6px;background:#d5d8db;border:1px solid #c3c6c9;border-bottom:none"></div>
<div class="a m" style="left:666.7px;top:395px;width:25.8px;height:13px;font-size:8.4px;line-height:13px;color:#444;text-align:center;white-space:nowrap"><span style="display:inline-block;transform:scaleX(0.92)">View</span></div>
<svg class="a" style="left:280px;top:394px" width="6" height="6"><path d="M0.5 0.5H5.5L0.5 5.5Z" fill="#3f7fbd"/></svg>
<div class="a" style="left:88px;top:407.5px;width:785px;height:30px;background:#f1f1f1;border:1px solid #d6d6d6;border-bottom-color:#e8e8e8"></div>
<div class="a" style="left:88px;top:407.5px;width:13px;height:30px;background:#ececec;border:1px solid #d6d6d6"></div>
<svg class="a" style="left:90px;top:411px" width="8" height="5"><path d="M1 0.8L4 3.8L7 0.8" stroke="#666" fill="none" stroke-width="0.9"/></svg>
<div class="a" style="left:204.2px;top:409px;width:1px;height:27px;background:#d2d2d2"></div>
<div class="a" style="left:259.2px;top:409px;width:1px;height:27px;background:#d2d2d2"></div>
<div class="a" style="left:313.3px;top:409px;width:1px;height:27px;background:#d2d2d2"></div>
<div class="a" style="left:342.3px;top:409px;width:1px;height:27px;background:#d2d2d2"></div>
<svg class="a" style="left:104.8px;top:412px" width="20" height="20" viewBox="0 0 20 20"><path d="M3 7L8 4.5L12 6.5L7 9Z" fill="#fafafa"/><path d="M3 7L7 9V18L3 16Z" fill="#e4e4e4"/><path d="M7 9L12 6.5V11L7 13.5Z" fill="#d4d4d4"/><path d="M7 13.5L12 11L17 13.5L12 16Z" fill="#f6f6f6"/><path d="M7 13.5L12 16V19.5L7 18Z" fill="#e4e4e4"/><path d="M12 16L17 13.5V17L12 19.5Z" fill="#cccccc"/><path d="M3 7L8 4.5L12 6.5V11L17 13.5V17L12 19.5L3 16Z M3 7L7 9L12 6.5M7 9V18M7 13.5L12 11M7 13.5L12 16L17 13.5M12 16V19.5" fill="none" stroke="#555" stroke-width="0.8" stroke-linejoin="round"/><path d="M1 3.5H7M4 0.5V6.5M1.8 1.3L6.2 5.7M6.2 1.3L1.8 5.7" stroke="#2d6fb3" stroke-width="1.2"/><path d="M16 18.5L19 15.5V18.5Z" fill="#222"/></svg>
<svg class="a" style="left:130.5px;top:412px" width="20" height="20" viewBox="0 0 20 20"><path d="M3 7L8 4.5L12 6.5L7 9Z" fill="#e8e8e8"/><path d="M3 7L7 9V18L3 16Z" fill="#e4e4e4"/><path d="M7 9L12 6.5V11L7 13.5Z" fill="#d4d4d4"/><path d="M7 13.5L12 11L17 13.5L12 16Z" fill="#e0e0e0"/><path d="M7 13.5L12 16V19.5L7 18Z" fill="#e4e4e4"/><path d="M12 16L17 13.5V17L12 19.5Z" fill="#cccccc"/><path d="M3 7L8 4.5L12 6.5V11L17 13.5V17L12 19.5L3 16Z M3 7L7 9L12 6.5M7 9V18M7 13.5L12 11M7 13.5L12 16L17 13.5M12 16V19.5" fill="none" stroke="#555" stroke-width="0.8" stroke-linejoin="round"/><path d="M11 8Q11.5 2.5 16.5 3L16 1L19.5 4.5L15.5 7.5L16 5.5Q13 5.5 12.5 9Z" fill="#888" stroke="#444" stroke-width="0.6"/></svg>
<svg class="a" style="left:154.9px;top:412px" width="20" height="20" viewBox="0 0 20 20"><path d="M2 2H16.5L18.5 4V18H2Z" fill="#4f82b6" stroke="#27527e" stroke-width="0.9"/><path d="M4.5 2.5H15V9.5H4.5Z" fill="#dfe6ee" stroke="#27527e" stroke-width="0.6"/><path d="M6 4.5H13.5M6 6.5H13.5" stroke="#8aa3bb" stroke-width="0.7"/><path d="M5.5 12H15V18H5.5Z" fill="#2a5a8a"/><path d="M7.5 13.2H10V17H7.5Z" fill="#c9d8e6"/><path d="M16 18.5L19 15.5V18.5Z" fill="#222"/></svg>
<svg class="a" style="left:179.3px;top:412px" width="20" height="20" viewBox="0 0 20 20"><path d="M4.54 6.85A6.3 6.3 0 0 1 9.12 3.76M13.15 4.54A6.3 6.3 0 0 1 16.24 9.12M15.46 13.15A6.3 6.3 0 0 1 10.88 16.24M6.85 15.46A6.3 6.3 0 0 1 3.76 10.88" fill="none" stroke="#23578a" stroke-width="3.6"/><path d="M4.54 6.85A6.3 6.3 0 0 1 9.12 3.76M13.15 4.54A6.3 6.3 0 0 1 16.24 9.12M15.46 13.15A6.3 6.3 0 0 1 10.88 16.24M6.85 15.46A6.3 6.3 0 0 1 3.76 10.88" fill="none" stroke="#4a88c4" stroke-width="2.2"/><path d="M12.29 3.32L8.76 1.19L9.49 6.34ZM16.68 12.29L18.81 8.76L13.66 9.49ZM7.71 16.68L11.24 18.81L10.51 13.66ZM3.32 7.71L1.19 11.24L6.34 10.51Z" fill="#4a88c4" stroke="#23578a" stroke-width="0.6"/><path d="M16 18.5L19 15.5V18.5Z" fill="#222"/></svg>
<svg class="a" style="left:209.0px;top:412px" width="20" height="20" viewBox="0 0 20 20"><path d="M8 2.5H18V9H8Z" fill="#f2f2f2" stroke="#555" stroke-width="0.9"/><path d="M9.5 4.5H16.5M9.5 6.5H16.5" stroke="#4a8ccc" stroke-width="1"/><path d="M2 10.5H12V17.5H2Z" fill="#f2f2f2" stroke="#555" stroke-width="0.9"/><path d="M3.5 12.5H10.5M3.5 14.5H10.5" stroke="#4a8ccc" stroke-width="1"/><path d="M2.5 8L5 5L6 8M14 12.5L15.5 16.5L18 13.5" stroke="#333" stroke-width="1" fill="none"/></svg>
<svg class="a" style="left:234.3px;top:412px" width="20" height="20" viewBox="0 0 20 20"><circle cx="10" cy="10" r="5.6" fill="none" stroke="#555" stroke-width="1"/><g stroke="#555" stroke-width="2.6" stroke-dasharray="2.2 2.16"><circle cx="10" cy="10" r="7.3" fill="none"/></g><circle cx="10" cy="10" r="6.3" fill="#f1f1f1"/><circle cx="10" cy="10" r="6.3" fill="none" stroke="#555" stroke-width="0.8"/><circle cx="10" cy="10" r="2.8" fill="none" stroke="#555" stroke-width="0.9"/></svg>
<svg class="a" style="left:263.2px;top:412px" width="20" height="20" viewBox="0 0 20 20"><path d="M6 7.5Q8.5 4.5 12 5Q16.5 6 16.5 11Q16.5 16 11 17" fill="none" stroke="#23578a" stroke-width="4.2"/><path d="M6 7.5Q8.5 4.5 12 5Q16.5 6 16.5 11Q16.5 16 11 17" fill="none" stroke="#4a88c4" stroke-width="2.6"/><path d="M1.5 5L9.5 4.5L3.5 12Z" fill="#4a88c4" stroke="#23578a" stroke-width="0.7"/></svg>
<svg class="a" style="left:289.0px;top:412px" width="20" height="20" viewBox="0 0 20 20"><g transform="translate(20,0) scale(-1,1)"><path d="M6 7.5Q8.5 4.5 12 5Q16.5 6 16.5 11Q16.5 16 11 17" fill="none" stroke="#9dbdd9" stroke-width="4.2"/><path d="M6 7.5Q8.5 4.5 12 5Q16.5 6 16.5 11Q16.5 16 11 17" fill="none" stroke="#b9d3e9" stroke-width="2.6"/><path d="M1.5 5L9.5 4.5L3.5 12Z" fill="#b9d3e9" stroke="#9dbdd9" stroke-width="0.7"/></g></svg>
<svg class="a" style="left:317.4px;top:412px" width="20" height="20" viewBox="0 0 20 20"><circle cx="10" cy="10" r="8.2" fill="#fafafa" stroke="#444" stroke-width="1"/><path d="M7.3 7.5Q7.3 4.5 10 4.5Q12.8 4.5 12.8 7.2Q12.8 9 10.5 10Q10 10.4 10 12" fill="none" stroke="#2d5f92" stroke-width="1.8"/><circle cx="10" cy="14.6" r="1.1" fill="#2d5f92"/><path d="M16 18.5L19 15.5V18.5Z" fill="#222"/></svg>
<svg class="a" style="left:347.0px;top:412px" width="20" height="20" viewBox="0 0 20 20"><path d="M3 6L10 3L17 6L10 9Z" fill="#fafafa" stroke="#555" stroke-width="0.8" stroke-linejoin="round"/><path d="M3 6L10 9V17.5L3 14.5Z" fill="#e6e6e6" stroke="#555" stroke-width="0.8" stroke-linejoin="round"/><path d="M17 6L10 9V17.5L17 14.5Z" fill="#cfcfcf" stroke="#555" stroke-width="0.8" stroke-linejoin="round"/><path d="M16 18.5L19 15.5V18.5Z" fill="#222"/></svg>
<svg class="a" style="left:372.0px;top:412px" width="20" height="20" viewBox="0 0 20 20"><path d="M5 4L14 2V16L5 18Z" fill="#4a8ccc" stroke="#23578a" stroke-width="0.8"/><path d="M9.5 0.5V19.5" stroke="#222" stroke-width="0.7" stroke-dasharray="1.5 1"/><path d="M16 18.5L19 15.5V18.5Z" fill="#222"/></svg>
<svg class="a" style="left:397.0px;top:412px" width="20" height="20" viewBox="0 0 20 20"><path d="M11 3.5L14 1.5H18V14L15 17H11Z" fill="#f2f2f2" stroke="#555" stroke-width="0.8" stroke-linejoin="round"/><path d="M14 1.5V14.5L11 17M14 14.5H18" stroke="#888" stroke-width="0.6" fill="none"/><path d="M2 8L4.5 6H13V13L10.5 15H2Z" fill="#4a8ccc" stroke="#23578a" stroke-width="0.9" stroke-linejoin="round"/><path d="M2 8H10.5V15M10.5 8L13 6" stroke="#23578a" stroke-width="0.7" fill="none"/><path d="M2.5 6.8L4.6 6.2H12.5L10.4 7.6H2.5Z" fill="#8fc0ea"/><path d="M16 18.5L19 15.5V18.5Z" fill="#222"/></svg>
<svg class="a" style="left:421.9px;top:412px" width="20" height="20" viewBox="0 0 20 20"><path d="M7 4.5Q11 2 14.5 4.5Q18 7.5 16.5 12Q14.5 17 9 17Q5 17 3 14.5" fill="none" stroke="#23578a" stroke-width="5.4" stroke-linecap="round"/><path d="M7 4.5Q11 2 14.5 4.5Q18 7.5 16.5 12Q14.5 17 9 17Q5 17 3 14.5" fill="none" stroke="#4a8ccc" stroke-width="3.8" stroke-linecap="round"/><path d="M8 5Q12 3.5 14.5 6" stroke="#8fc0ea" stroke-width="1" fill="none"/><path d="M3 8.5L10 11.5" stroke="#333" stroke-width="0.7"/><path d="M16 18.5L19 15.5V18.5Z" fill="#222"/></svg>
<svg class="a" style="left:446.9px;top:412px" width="20" height="20" viewBox="0 0 20 20"><path d="M3.5 15.5Q5 18 8 15Q10 12 10.5 8Q11 4 14.5 4.5Q17 5 16.5 7.5" fill="none" stroke="#23578a" stroke-width="5" stroke-linecap="round"/><path d="M3.5 15.5Q5 18 8 15Q10 12 10.5 8Q11 4 14.5 4.5Q17 5 16.5 7.5" fill="none" stroke="#4a8ccc" stroke-width="3.4" stroke-linecap="round"/><path d="M9.5 12Q10.5 6 13.5 4.8" stroke="#8fc0ea" stroke-width="0.9" fill="none"/><path d="M16 18.5L19 15.5V18.5Z" fill="#222"/></svg>
<svg class="a" style="left:471.9px;top:412px" width="20" height="20" viewBox="0 0 20 20"><ellipse cx="10" cy="3.5" rx="2.8" ry="1.4" fill="#f0f0f0" stroke="#555" stroke-width="0.7"/><path d="M7.2 3.5L7 9L2.5 15L10 18.5L17.5 15L13 9L12.8 3.5Q10 5.2 7.2 3.5Z" fill="#4a8ccc" stroke="#23578a" stroke-width="0.9" stroke-linejoin="round"/><path d="M10 5V18.5M7 9Q10 10.5 13 9" stroke="#23578a" stroke-width="0.6" fill="none"/><path d="M8 5L7.8 9.5L4 14.5L9.5 17V5Z" fill="#6aa6dc"/><path d="M16 18.5L19 15.5V18.5Z" fill="#222"/></svg>
<svg class="a" style="left:496.9px;top:412px" width="20" height="20" viewBox="0 0 20 20"><path d="M3 5.5L6.5 2.5H17.5L14.5 5.5Z" fill="#f4f4f4" stroke="#555" stroke-width="0.8" stroke-linejoin="round"/><path d="M14.5 5.5L17.5 2.5V14.5L14.5 17.5Z" fill="#d6d6d6" stroke="#555" stroke-width="0.8" stroke-linejoin="round"/><path d="M3 5.5H14.5V17.5H3Z" fill="#f6f6f6" stroke="#555" stroke-width="0.8"/><path d="M3 11V8Q3 5.5 6 5.5H14.5V11Z" fill="#4a8ccc" stroke="#23578a" stroke-width="0.7"/><path d="M6.5 2.5Q4 3 3.5 5.5L14.5 5.5L17.5 2.5Z" fill="#7fb3e3" stroke="#23578a" stroke-width="0.6"/><path d="M16 18.5L19 15.5V18.5Z" fill="#222"/></svg>
<svg class="a" style="left:521.9px;top:412px" width="20" height="20" viewBox="0 0 20 20"><path d="M3 5.5L6.5 2.5H17.5L14.5 5.5Z" fill="#f4f4f4" stroke="#555" stroke-width="0.8" stroke-linejoin="round"/><path d="M14.5 5.5L17.5 2.5V14.5L14.5 17.5Z" fill="#d6d6d6" stroke="#555" stroke-width="0.8" stroke-linejoin="round"/><path d="M3 5.5H14.5V17.5H3Z" fill="#f4f4f4" stroke="#555" stroke-width="0.8"/><circle cx="8.8" cy="11.5" r="4.3" fill="#4a8ccc" stroke="#23578a" stroke-width="0.8"/><path d="M6 13.5Q6 9 10.5 8.5Q12 9.5 12 11Q11 14 7 14.5Z" fill="#cfe3f4"/><path d="M16 18.5L19 15.5V18.5Z" fill="#222"/></svg>
<svg class="a" style="left:546.8px;top:412px" width="20" height="20" viewBox="0 0 20 20"><path d="M2 6L8 2.5L18 8V16L12.5 18H2Z" fill="#4a8ccc" stroke="#23578a" stroke-width="0.9" stroke-linejoin="round"/><path d="M2 6L12 11.5L18 8M12 11.5V18" stroke="#23578a" stroke-width="0.7" fill="none"/><path d="M12 11.5L18 8.5V16L12.5 18Z" fill="#f4f4f4" stroke="#555" stroke-width="0.7"/><path d="M4 8L8 4L16 8.5" stroke="#8fc0ea" stroke-width="0.8" fill="none"/></svg>
<svg class="a" style="left:571.8px;top:412px" width="20" height="20" viewBox="0 0 20 20"><path d="M3 5.5L6.5 2.5H17.5V14.5L14.5 17.5H3Z" fill="#ececec" stroke="#555" stroke-width="0.9" stroke-linejoin="round"/><path d="M5.5 6.5L7.5 4.5H15.5V13.5L13.5 15.5H5.5Z" fill="#4a8ccc" stroke="#23578a" stroke-width="0.7"/><path d="M7.5 4.5V12.5H15.5M7.5 12.5L5.5 15.5" stroke="#23578a" stroke-width="0.6" fill="none"/><path d="M8 5H15V12H8Z" fill="#7fb3e3"/></svg>
<svg class="a" style="left:596.8px;top:412px" width="20" height="20" viewBox="0 0 20 20"><path d="M2 8L5.5 5H14V15L10.5 18H2Z" fill="#4a8ccc" stroke="#23578a" stroke-width="0.9" stroke-linejoin="round"/><path d="M2 8H10.5V18M10.5 8L14 5" stroke="#23578a" stroke-width="0.7" fill="none"/><path d="M3 7.5L6 4.8L10 6L7 8.5Z" fill="#f2f2f2" stroke="#555" stroke-width="0.6"/><path d="M10 3L13 1.5L14 5" fill="#eee" stroke="#555" stroke-width="0.7"/><path d="M16 6V15.5M13.8 13L16 16.5L18.2 13" stroke="#111" stroke-width="1.4" fill="none"/></svg>
<svg class="a" style="left:621.8px;top:412px" width="20" height="20" viewBox="0 0 20 20"><path d="M2 17L7 3L10 4.5L8 18Z" fill="#4a8ccc" stroke="#23578a" stroke-width="0.8" stroke-linejoin="round"/><path d="M10 4.5L14 3L18 16L9 18Z" fill="#ececec" stroke="#555" stroke-width="0.8" stroke-linejoin="round"/><path d="M3.5 15L7.5 4.5" stroke="#8fc0ea" stroke-width="0.8"/></svg>
<svg class="a" style="left:646.8px;top:412px" width="20" height="20" viewBox="0 0 20 20"><g fill="#f0f0f0" stroke="#555" stroke-width="0.9"><rect x="1.5" y="1.5" width="4.5" height="7" rx="1.2"/><rect x="7.8" y="1.5" width="4.5" height="7" rx="1.2"/><rect x="14" y="1.5" width="4.5" height="7" rx="1.2"/><rect x="7.8" y="11" width="4.5" height="7" rx="1.2"/><rect x="14" y="11" width="4.5" height="7" rx="1.2"/></g><rect x="1.5" y="11" width="4.5" height="7" rx="1.2" fill="#4a8ccc" stroke="#23578a" stroke-width="0.9"/><path d="M16 18.5L19 15.5V18.5Z" fill="#222"/></svg>
<svg class="a" style="left:671.7px;top:412px" width="20" height="20" viewBox="0 0 20 20"><path d="M13 2L17 4V15L6 19L2 16.5L13 11Z" fill="#e8e8e8" stroke="#555" stroke-width="0.9" stroke-linejoin="round"/><path d="M3 16L12.5 6L13 11Z" fill="#4a8ccc" stroke="#23578a" stroke-width="0.8"/><path d="M13 2L13 11M13 11L17 15" stroke="#555" stroke-width="0.7" fill="none"/></svg>
<svg class="a" style="left:696.7px;top:412px" width="20" height="20" viewBox="0 0 20 20"><path d="M3 6L10 3L17 6L10 9Z" fill="#f6f6f6" stroke="#555" stroke-width="0.8" stroke-linejoin="round"/><path d="M3 6L10 9V17.5L3 14.5Z" fill="#f0f0f0" stroke="#555" stroke-width="0.8" stroke-linejoin="round"/><path d="M17 6L10 9V17.5L17 14.5Z" fill="#e4e4e4" stroke="#555" stroke-width="0.8" stroke-linejoin="round"/><path d="M4 10Q7 8 10 11Q13 13 16 10V14.5L10 17.5L4 14.5Z" fill="#4a8ccc" stroke="#23578a" stroke-width="0.6"/><path d="M16 18.5L19 15.5V18.5Z" fill="#222"/></svg>
<svg class="a" style="left:721.7px;top:412px" width="20" height="20" viewBox="0 0 20 20"><path d="M8 3L10.5 1.5H17V8L14.5 9.5H8Z" fill="#4a8ccc" stroke="#23578a" stroke-width="0.8"/><path d="M8 3H14.5V9.5M14.5 3L17 1.5" stroke="#23578a" stroke-width="0.6" fill="none"/><path d="M3 8L5.5 6.5H12V13L9.5 14.5H3Z" fill="#5b9ad6" stroke="#23578a" stroke-width="0.8"/><path d="M3 8H9.5V14.5M9.5 8L12 6.5" stroke="#23578a" stroke-width="0.6" fill="none"/><path d="M8 12L10.5 10.5H17V17L14.5 18.5H8Z" fill="#4a8ccc" stroke="#23578a" stroke-width="0.8"/><path d="M8 12H14.5V18.5M14.5 12L17 10.5" stroke="#23578a" stroke-width="0.6" fill="none"/></svg>
<svg class="a" style="left:746.7px;top:412px" width="20" height="20" viewBox="0 0 20 20"><path d="M3 6L10 3L17 6L10 9Z" fill="#f4f4f4" stroke="#555" stroke-width="0.8" stroke-linejoin="round"/><path d="M3 6L10 9V17.5L3 14.5Z" fill="#e4e4e4" stroke="#555" stroke-width="0.8" stroke-linejoin="round"/><path d="M17 6L10 9V17.5L17 14.5Z" fill="#d8d8d8" stroke="#555" stroke-width="0.8" stroke-linejoin="round"/><path d="M5 8L10 10.5V16L5 13.5Z" fill="#4a8ccc" opacity="0.7"/><path d="M6 10.5H15M12.5 8.5L15.5 10.5L12.5 12.5" stroke="#111" stroke-width="1.3" fill="none"/><path d="M16 18.5L19 15.5V18.5Z" fill="#222"/></svg>
<svg class="a" style="left:771.7px;top:412px" width="20" height="20" viewBox="0 0 20 20"><path d="M3 6L10 3L17 6L10 9Z" fill="#f4f4f4" stroke="#555" stroke-width="0.8" stroke-linejoin="round"/><path d="M3 6L10 9V17.5L3 14.5Z" fill="#eaeaea" stroke="#555" stroke-width="0.8" stroke-linejoin="round"/><path d="M17 6L10 9V17.5L17 14.5Z" fill="#dcdcdc" stroke="#555" stroke-width="0.8" stroke-linejoin="round"/><path d="M10 9L17 6V14.5L10 17.5Z" fill="#8dbde6" opacity="0.8"/><path d="M12 11L14.5 13.5M14.5 11L12 13.5" stroke="#d22" stroke-width="1.1"/><path d="M16 18.5L19 15.5V18.5Z" fill="#222"/></svg>
<svg class="a" style="left:796.6px;top:412px" width="20" height="20" viewBox="0 0 20 20"><path d="M9 5L13 3L18 5V11L13 13L9 11Z" fill="#4a8ccc" stroke="#23578a" stroke-width="0.9"/><path d="M9 5L13 7L18 5M13 7V13" stroke="#23578a" stroke-width="0.6" fill="none"/><path d="M2 13L5 11.5L9 13V17L5 18.5L2 17Z" fill="#f2f2f2" stroke="#555" stroke-width="0.8"/><path d="M6 14.5L12 9M9 8.5H12.5V12" stroke="#111" stroke-width="1.3" fill="none"/></svg>
<svg class="a" style="left:821.6px;top:412px" width="20" height="20" viewBox="0 0 20 20"><ellipse cx="10" cy="14" rx="8.5" ry="3.8" fill="#e8e8e8" stroke="#555" stroke-width="0.8"/><path d="M1.5 13Q2 5 10 4.5Q18 5 18.5 13Q10 17 1.5 13Z" fill="#4a8ccc" stroke="#23578a" stroke-width="0.8"/><path d="M10 9L15.5 3.5M13 3H16V6" stroke="#111" stroke-width="1.3" fill="none"/></svg>
<svg class="a" style="left:846.6px;top:412px" width="20" height="20" viewBox="0 0 20 20"><path d="M3 6L6 3H12L9 6Z" fill="#fafafa" stroke="#555" stroke-width="0.8" stroke-linejoin="round"/><path d="M9 6L12 3V8L9 11Z" fill="#dedede" stroke="#555" stroke-width="0.8" stroke-linejoin="round"/><path d="M9 11L12 8H18L15 11Z" fill="#f6f6f6" stroke="#555" stroke-width="0.8" stroke-linejoin="round"/><path d="M15 11L18 8V15L15 18Z" fill="#d2d2d2" stroke="#555" stroke-width="0.8" stroke-linejoin="round"/><path d="M3 6H9V11H15V18H3Z" fill="#eeeeee" stroke="#555" stroke-width="0.9" stroke-linejoin="round"/></svg>
<!-- /TOOLBAR -->
<!-- compass -->
<svg class="a" style="left:34px;top:0px" width="52" height="48" viewBox="0 0 52 48">
<defs><radialGradient id="cg" cx="50%" cy="45%" r="55%"><stop offset="0" stop-color="#215a8e"/><stop offset="0.85" stop-color="#1b4f80"/><stop offset="1" stop-color="#143f69"/></radialGradient>
<linearGradient id="ctop" x1="0" y1="0" x2="0" y2="1"><stop offset="0" stop-color="#a7bdd2"/><stop offset="1" stop-color="#6283a6"/></linearGradient></defs>
<circle cx="25" cy="23.3" r="21.8" fill="url(#cg)"/>
<path d="M10.6 15.5C11 8 18 4.4 25.5 4.4C33 4.4 40 8 40.4 15.5L31.2 19.2A8.4 8.4 0 0 0 19.4 19.2Z" fill="url(#ctop)"/>
<path d="M11 15.8L19 19.6M40 15.8L31.6 19.6" stroke="#8ea8c2" stroke-width="0.6"/>
<circle cx="25.3" cy="23.5" r="8.4" fill="none" stroke="#3a72a5" stroke-width="0.9"/>
<path d="M22.3 19.2V28L29.8 23.6Z" fill="none" stroke="#fff" stroke-width="1.15" stroke-linejoin="round"/>
<path d="M13.5 34L18.6 29.6M37 34L31.8 29.6" stroke="#4f7fab" stroke-width="0.7"/>
<text x="25.3" y="38.5" font-size="6" fill="#fff" text-anchor="middle" font-weight="bold" font-family="Liberation Sans">V,R</text>
<text x="11.5" y="26.3" font-size="6.2" fill="#fff" text-anchor="middle" font-weight="bold" font-family="Liberation Sans">3D</text>
<path d="M38.5 20.5L39.2 25.8M40.8 20.2L38.6 22.8" stroke="#fff" stroke-width="1.1"/>
<text x="26" y="13.2" font-size="6.2" fill="#fff" text-anchor="middle" font-weight="bold" font-style="italic" font-family="Liberation Sans">Yy</text>
</svg>

<!-- title bar -->
<div class="a" style="left:12px;top:57px;width:10px;height:10px;background:#c9302c"></div>
<svg class="a" style="left:12px;top:57px" width="10" height="10" viewBox="0 0 36 27"><g fill="#fff" transform="translate(-2,0) scale(1.1)">
<path d="M14.3 4.8L21.6 4.6Q23 5 22.2 6.6L17.6 12.6L16.6 12.4L20.2 6.4L14.8 6.3Z"/>
<path d="M10.2 13.3L17.6 13.5Q19 13.8 18.4 15.6Q16.5 21 8.8 24.2Q7.9 24.3 8.3 23.5L13.1 15.1L13.9 15.3L10.6 21.8Q15.6 19.4 16.6 14.9L10.8 14.8Z"/>
<path d="M18.6 12.2L27.2 11.2L26.6 12.8L21.4 13.2Q24.6 16 25.8 18.6Q26.6 20.6 25 21.2L17.4 21.8L18.2 20.6L24.2 20Q23.4 17 20.6 14.6Q19.6 13.6 18.6 12.2Z"/>
</g></svg>
<div class="a m" style="left:28.8px;top:58px;font-size:8.5px;line-height:9px;font-weight:bold;color:#6b6b6b;white-space:nowrap;transform:scaleX(0.952);transform-origin:0 0">xDesign - Yatish K personal space</div>
<div class="a" style="left:12px;top:75px;width:936px;height:1px;background:#e6e6e6"></div>
<svg class="a" style="left:760px;top:55px" width="185" height="14" viewBox="0 0 185 14">
<g fill="none" stroke="#707070" stroke-width="1.1">
<circle cx="8" cy="5.8" r="3.9"/><path d="M10.8 8.6L14 11.8"/>
<path d="M63 3C63 1 67 1 67 3.4C67 5.2 65 5.6 65 7.8"/>
<path d="M170.8 2.5L179.5 11.2M179.5 2.5L170.8 11.2" stroke-width="1.3"/>
<path d="M114.6 5A4.6 4.6 0 0 1 123 4.8M123.4 9A4.6 4.6 0 0 1 115 9.4" stroke-width="1.3"/>
</g>
<g fill="#707070">
<circle cx="65" cy="11.2" r="0.8"/>
<circle cx="36" cy="3.8" r="2.4"/><path d="M31.5 11.5C31.5 7.8 33.5 6.8 36 6.8C37.5 6.8 38.5 7.2 39 7.8L35.5 11.5Z"/><path d="M37 11.5L41.5 7L42.5 8L38 12.2L36.6 12.4Z"/>
<circle cx="92" cy="7" r="4"/>
<path d="M124.2 2.4V6.4H120.4ZM113.8 11.8V7.8H117.6Z"/>
<path d="M142 12.5L145.5 9L144 7.5L146.5 6L150 2.5L152.6 5L149 8.5L147.6 11L146.2 9.8L142.6 13Z"/>
</g>
<g stroke="#707070" stroke-width="1.8" stroke-dasharray="2 2.08"><circle cx="92" cy="7" r="4.9" fill="none"/></g>
<circle cx="92" cy="7" r="1.5" fill="#fff"/>
</svg>
</body></html>
